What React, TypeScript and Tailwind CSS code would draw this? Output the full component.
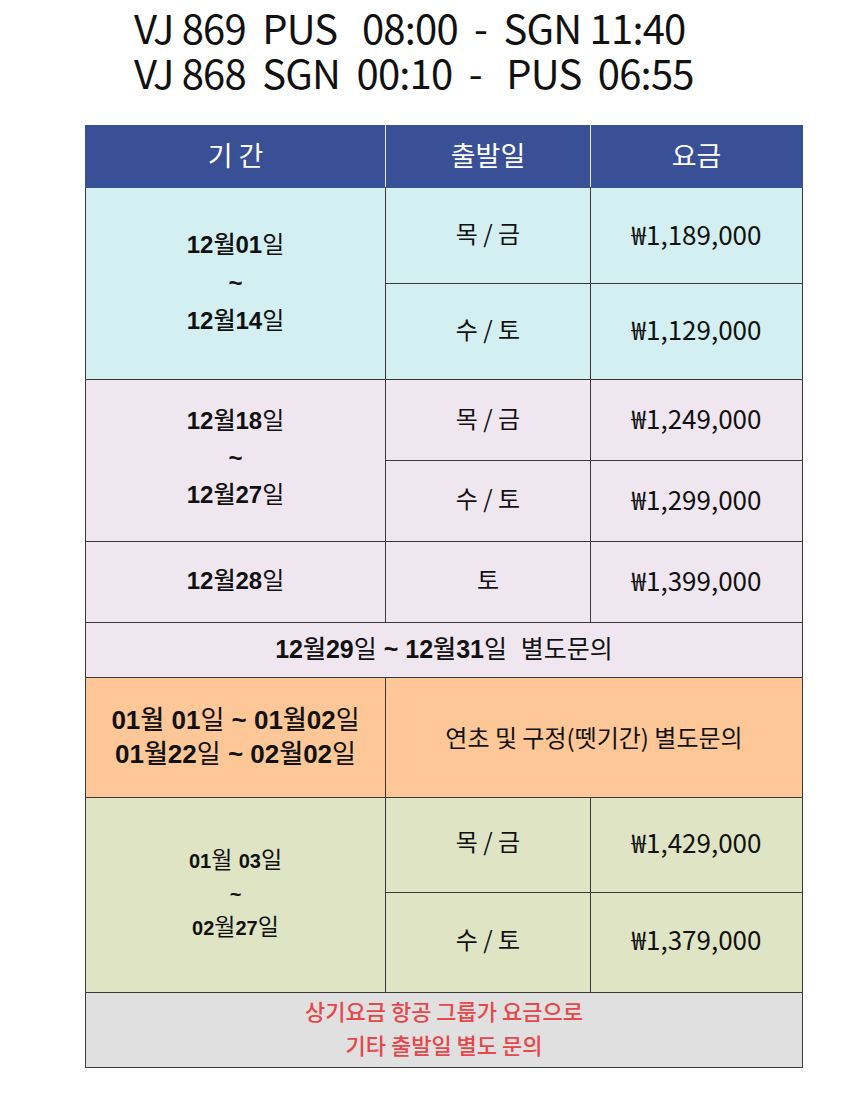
import React from "react";

const kr = { fontFamily: '"Noto Sans CJK KR", "Noto Sans", sans-serif' };
const mix = { fontFamily: '"Liberation Sans", "Noto Sans CJK KR", sans-serif' };

function D({ n, d }: { n: string; d: string }) {
  return (
    <span>
      <b className="font-bold">{n}</b>
      <span className="font-medium">월</span>
      <b className="font-bold">{d}</b>
      <span className="font-normal">일</span>
    </span>
  );
}

const B = "border border-[#3a3a3a]";

export default function App() {
  return (
    <div className="w-[860px] h-[1100px] bg-white text-[#111]" style={kr}>
      <div className="pt-[5px] pl-[134px] text-[40px] leading-[45px] tracking-[-0.8px] whitespace-pre text-[#111]">
        <div>VJ 869  PUS   08:00  -  SGN 11:40</div>
        <div>VJ 868  SGN  00:10  -   PUS  06:55</div>
      </div>
      <table className="ml-[85px] mt-[30px] border-collapse table-fixed w-[717px]">
        <colgroup>
          <col className="w-[300px]" />
          <col className="w-[205px]" />
          <col className="w-[212px]" />
        </colgroup>
        <tbody>
          <tr className="h-[62px] bg-[#3a5096] text-white text-[27px]">
            <td className="border border-[#3a5096] border-r-[#e8e8e8] text-center pb-[3px]">기 간</td>
            <td className="border border-[#3a5096] border-r-[#e8e8e8] text-center pb-[3px]">출발일</td>
            <td className="border border-[#3a5096] text-center pb-[3px]">요금</td>
          </tr>
          <tr className="h-[96px] bg-[#d3eff1]">
            <td rowSpan={2} className={`${B} text-center text-[24px] leading-[38px] pb-[2px]`} style={mix}>
              <div><D n="12" d="01" /></div>
              <div className="font-bold">~</div>
              <div><D n="12" d="14" /></div>
            </td>
            <td className={`${B} text-center text-[24px] pb-[5px]`}>목 / 금</td>
            <td className={`${B} text-center text-[26px] pb-[5px]`}>₩1,189,000</td>
          </tr>
          <tr className="h-[96px] bg-[#d3eff1]">
            <td className={`${B} text-center text-[24px] pb-[6px]`}>수 / 토</td>
            <td className={`${B} text-center text-[26px] pb-[6px]`}>₩1,129,000</td>
          </tr>
          <tr className="h-[81px] bg-[#efe6ef]">
            <td rowSpan={2} className={`${B} text-center text-[24px] leading-[37px] pb-[6px]`} style={mix}>
              <div><D n="12" d="18" /></div>
              <div className="font-bold">~</div>
              <div><D n="12" d="27" /></div>
            </td>
            <td className={`${B} text-center text-[24px] pb-[5px]`}>목 / 금</td>
            <td className={`${B} text-center text-[26px] pb-[5px]`}>₩1,249,000</td>
          </tr>
          <tr className="h-[81px] bg-[#efe6ef]">
            <td className={`${B} text-center text-[24px] pb-[6px]`}>수 / 토</td>
            <td className={`${B} text-center text-[26px] pb-[6px]`}>₩1,299,000</td>
          </tr>
          <tr className="h-[81px] bg-[#efe6ef]">
            <td className={`${B} text-center text-[24px] pb-[2px]`} style={mix}>
              <D n="12" d="28" />
            </td>
            <td className={`${B} text-center text-[24px] pb-[6px]`}>토</td>
            <td className={`${B} text-center text-[26px] pb-[6px]`}>₩1,399,000</td>
          </tr>
          <tr className="h-[55px] bg-[#efe6ef]">
            <td colSpan={3} className={`${B} text-center text-[25px] whitespace-pre pb-[2px]`} style={mix}>
              <D n="12" d="29" /> <b>~</b> <D n="12" d="31" />{"  "}
              <span style={kr}>별도문의</span>
            </td>
          </tr>
          <tr className="h-[120px] bg-[#fdc797]">
            <td className={`${B} text-center text-[26px] leading-[34px] pb-[2px]`} style={mix}>
              <div>
                <b>01</b><span className="font-medium">월</span> <b>01</b>일 <b>~ 01</b><span className="font-medium">월</span><b>02</b>일
              </div>
              <div>
                <b>01</b><span className="font-medium">월</span><b>22</b>일 <b>~ 02</b><span className="font-medium">월</span><b>02</b>일
              </div>
            </td>
            <td colSpan={2} className={`${B} text-center text-[24px] pb-[2px]`}>연초 및 구정(뗏기간) 별도문의</td>
          </tr>
          <tr className="h-[95px] bg-[#dfe5c4]">
            <td rowSpan={2} className={`${B} text-center text-[23px] leading-[33px] pb-[2px]`} style={mix}>
              <div>
                <b className="text-[20px]">01</b>월 <b className="text-[20px]">03</b>일
              </div>
              <div className="font-bold text-[20px]">~</div>
              <div>
                <b className="text-[20px]">02</b>월<b className="text-[20px]">27</b>일
              </div>
            </td>
            <td className={`${B} text-center text-[24px] pb-[8px]`}>목 / 금</td>
            <td className={`${B} text-center text-[26px] pb-[8px]`}>₩1,429,000</td>
          </tr>
          <tr className="h-[100px] bg-[#dfe5c4]">
            <td className={`${B} text-center text-[24px] pb-[8px]`}>수 / 토</td>
            <td className={`${B} text-center text-[26px] pb-[8px]`}>₩1,379,000</td>
          </tr>
          <tr className="h-[74px] bg-[#e0e0e0]">
            <td colSpan={3} className={`${B} text-center text-[22px] font-medium leading-[34px] text-[#e5474a] pb-[6px]`}>
              <div>상기요금 항공 그룹가 요금으로</div>
              <div>기타 출발일 별도 문의</div>
            </td>
          </tr>
        </tbody>
      </table>
    </div>
  );
}
